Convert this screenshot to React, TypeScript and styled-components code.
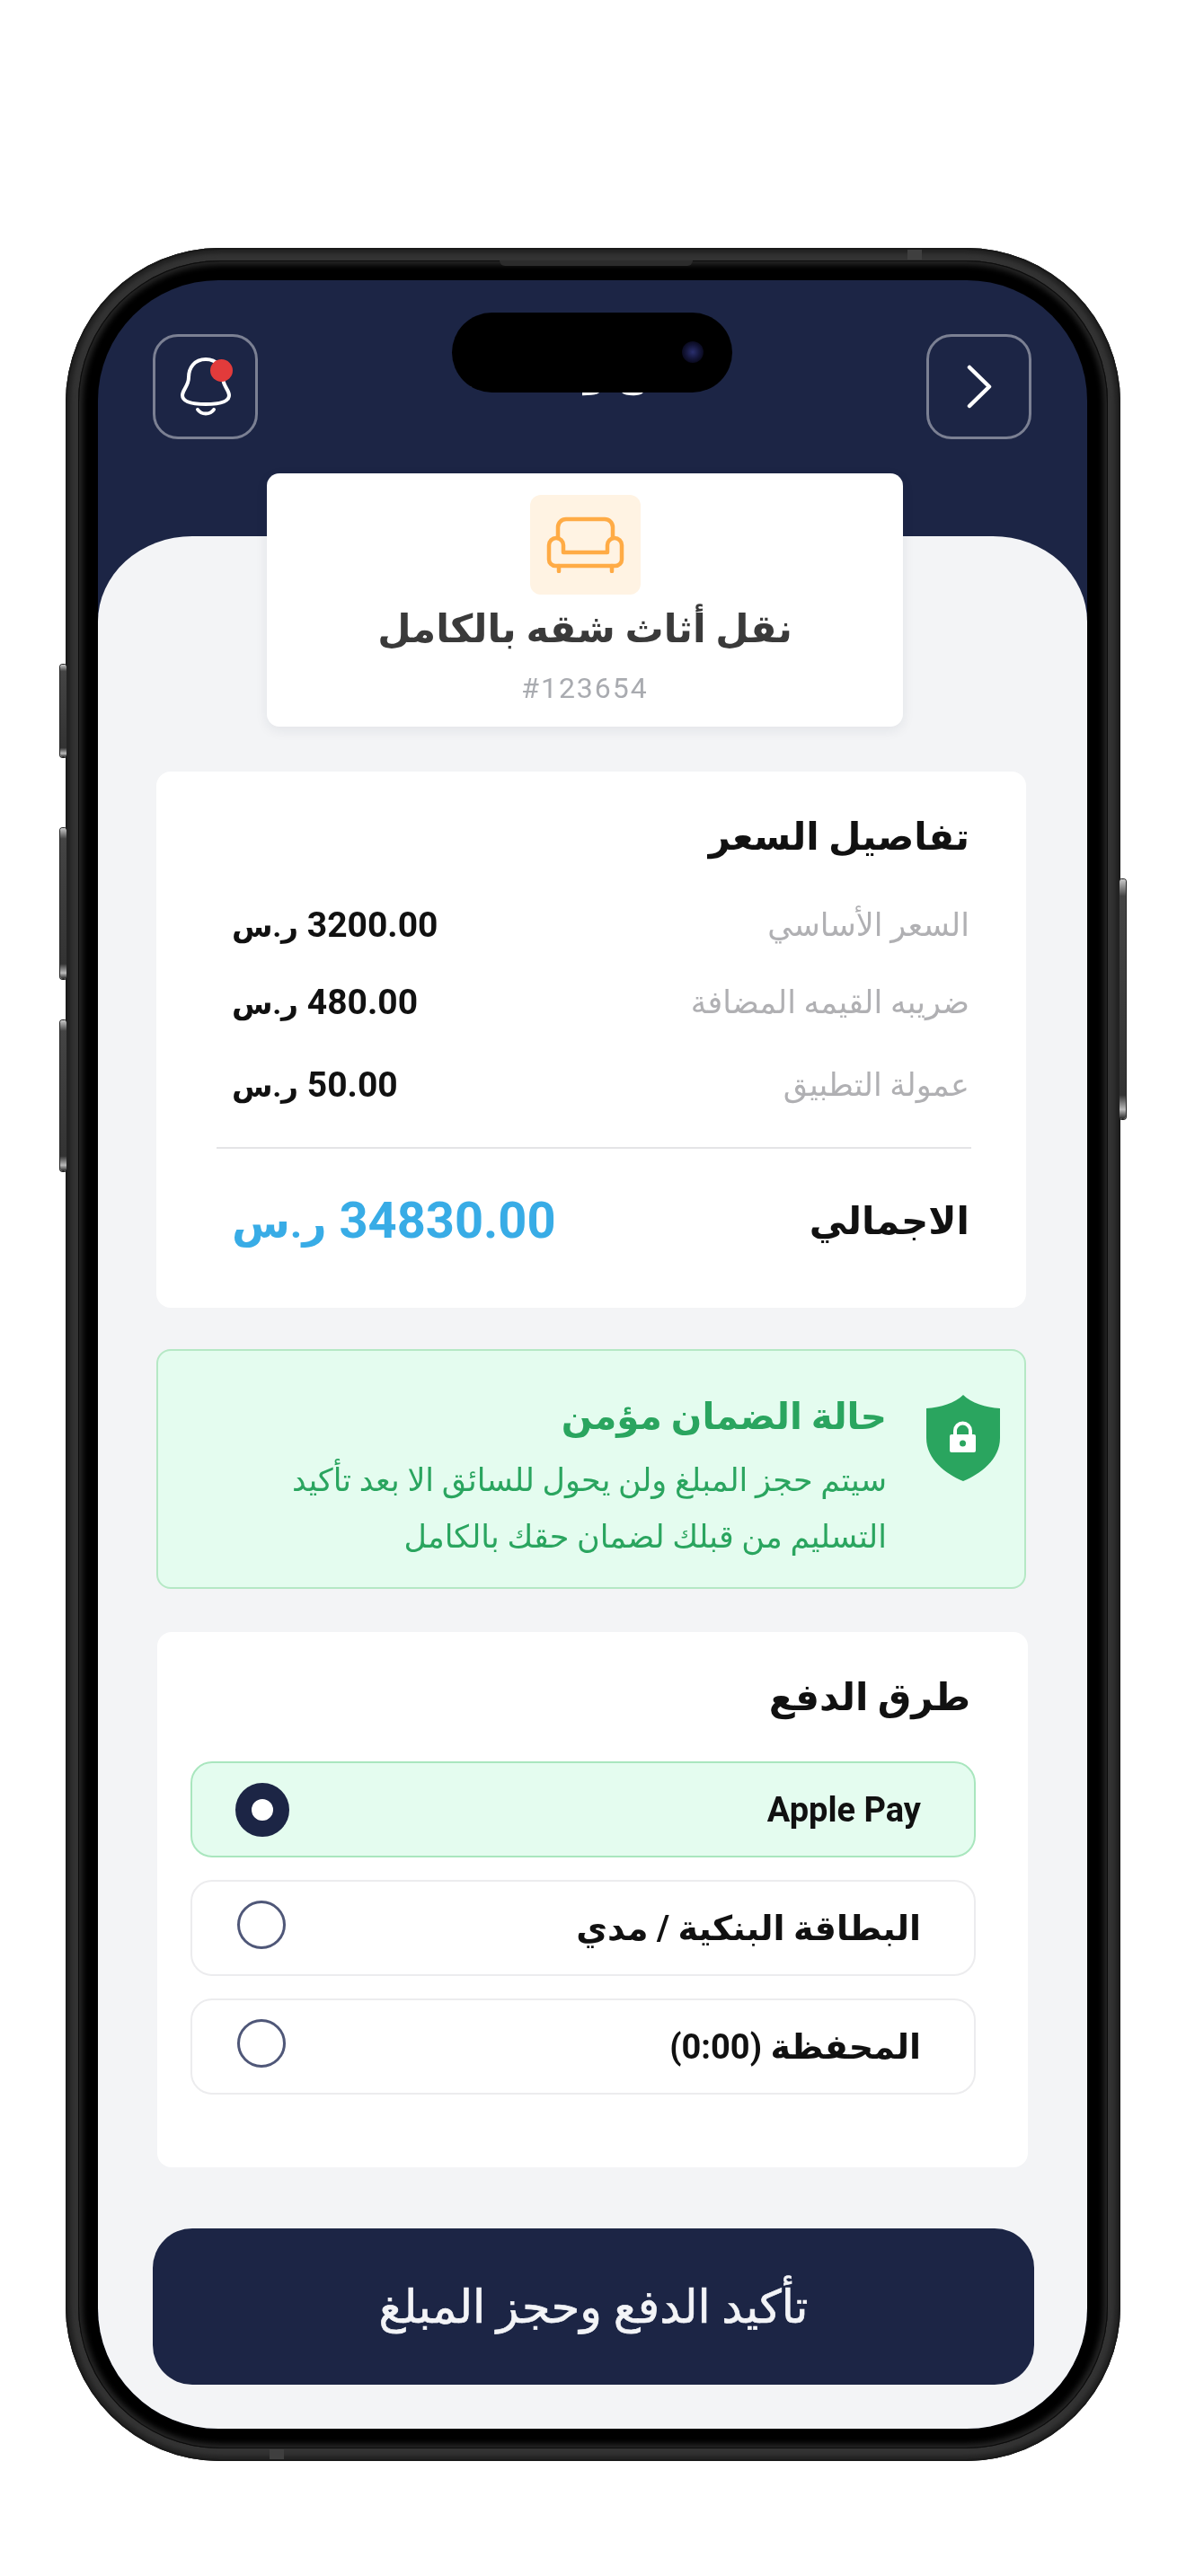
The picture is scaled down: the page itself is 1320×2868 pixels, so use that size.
import React from 'react';
import styled, { createGlobalStyle } from 'styled-components';

const GlobalStyle = createGlobalStyle`
  html, body {
    margin: 0;
    padding: 0;
    background: #fff;
    font-family: "Roboto", "DejaVu Sans", sans-serif;
  }
  * { box-sizing: border-box; }
`;

const navy = '#1c2545';
const green = '#2aa55f';

const Page = styled.div`
  width: 1320px;
  height: 2868px;
  padding: 276px 0 0 73px;
`;

const Frame = styled.div`
  position: relative;
  width: 1174px;
  height: 2464px;
  padding: 14px;
  border-radius: 172px;
  background: #333;
  box-shadow: inset 0 0 0 2px #1a1a1a, inset 0 0 4px 6px #222;
`;

const Bezel = styled.div`
  width: 100%;
  height: 100%;
  padding: 22px;
  border-radius: 158px;
  background: #000;
  box-shadow: inset 0 0 0 1px #0c0c0c, inset 0 0 6px 5px #262626;
`;

const Screen = styled.div`
  position: relative;
  width: 1101px;
  height: 2392px;
  overflow: hidden;
  border-radius: 134px;
  background: ${navy};
  filter: blur(0.6px);
`;

const SideKey = styled.span<{ $side: 'left' | 'right'; $top: number; $height: number }>`
  position: absolute;
  top: ${p => p.$top}px;
  ${p => p.$side}: -6px;
  width: 7px;
  height: ${p => p.$height}px;
  border-radius: 3px;
  background: linear-gradient(to bottom, #c9c9c9 0, #444 7%, #333 90%, #bbb 96%, #222 100%);
  box-shadow: 0 0 0 1px #222;
`;

const SpeakerLip = styled.span`
  position: absolute;
  top: 14px;
  left: 483px;
  width: 215px;
  height: 6px;
  border-radius: 0 0 6px 6px;
  background: #2c2c2c;
`;

const AntennaBand = styled.span<{ $top?: boolean; $left: number }>`
  position: absolute;
  ${p => (p.$top ? 'top: 2px;' : 'bottom: 2px;')}
  left: ${p => p.$left}px;
  width: 16px;
  height: 11px;
  background: #3f3f3f;
`;

const Island = styled.div`
  position: absolute;
  top: 36px;
  left: 394px;
  width: 312px;
  height: 89px;
  border-radius: 45px;
  background: #000;
`;

const Lens = styled.span`
  position: absolute;
  top: 32px;
  right: 32px;
  width: 24px;
  height: 24px;
  border-radius: 50%;
  background: radial-gradient(circle, #2a2f6e 0, #14163a 45%, #08081a 75%, #000 100%);
`;

const Header = styled.header`
  height: 285px;
  padding: 60px 62px 0 61px;
  display: flex;
  align-items: flex-start;
`;

const IconButton = styled.button`
  position: relative;
  width: 117px;
  height: 117px;
  flex: none;
  padding: 0;
  display: flex;
  align-items: center;
  justify-content: center;
  border: 3px solid rgba(255, 255, 255, 0.42);
  border-radius: 28px;
  background: transparent;
`;

const Dot = styled.span`
  position: absolute;
  top: 25px;
  left: 61px;
  width: 25px;
  height: 25px;
  border-radius: 50%;
  background: #e23b3b;
`;

const HeaderTitle = styled.h1`
  flex: 1;
  margin: 0;
  padding-top: 14px;
  text-align: center;
  font-size: 42px;
  line-height: 60px;
  font-weight: 700;
  color: #fff;
`;

const Sheet = styled.main`
  display: flow-root;
  height: 2107px;
  padding: 0 68px 0 65px;
  border-radius: 105px 105px 0 0 / 95px 95px 0 0;
  background: #f3f4f6;
`;

const JobCard = styled.section`
  width: 708px;
  height: 282px;
  margin: -70px 0 0 123px;
  padding-top: 24px;
  display: flex;
  flex-direction: column;
  align-items: center;
  border-radius: 14px;
  background: #fff;
  box-shadow: 0 4px 14px rgba(30, 40, 70, 0.08);
`;

const IconTile = styled.div`
  width: 123px;
  height: 111px;
  display: flex;
  align-items: center;
  justify-content: center;
  border-radius: 12px;
  background: #fff3e3;
`;

const JobTitle = styled.h2`
  margin: 8px 0 0;
  font-size: 43px;
  line-height: 60px;
  font-weight: 700;
  color: #3a3a3a;
`;

const JobCode = styled.div`
  margin-top: 18px;
  font-size: 32px;
  line-height: 36px;
  letter-spacing: 2px;
  color: #a9abb0;
`;

const PriceCard = styled.section`
  height: 597px;
  margin-top: 50px;
  padding: 40px 63px 0 84px;
  border-radius: 16px;
  background: #fff;
`;

const SectionTitle = styled.h3`
  margin: 0;
  font-size: 42px;
  line-height: 66px;
  font-weight: 700;
  color: #111;
`;

const PriceRows = styled.div`
  margin-top: 22px;
`;

const PriceRow = styled.div<{ $height: number }>`
  height: ${p => p.$height}px;
  display: flex;
  align-items: center;
  justify-content: space-between;
`;

const PriceLabel = styled.span`
  font-size: 35px;
  color: #b0b0b3;
`;

const PriceValue = styled.span`
  font-size: 39px;
  font-weight: 700;
  color: #111;
`;

const Currency = styled.span<{ $size: number }>`
  font-size: ${p => p.$size}px;
`;

const Divider = styled.hr`
  height: 2px;
  margin: 20px -2px 0 -17px;
  border: 0;
  background: #e4e4e6;
`;

const TotalRow = styled.div`
  height: 160px;
  display: flex;
  align-items: center;
  justify-content: space-between;
`;

const TotalLabel = styled.span`
  font-size: 42px;
  font-weight: 700;
  color: #111;
`;

const TotalValue = styled.span`
  font-size: 56px;
  font-weight: 700;
  color: #38ace6;
`;

const GuaranteeCard = styled.section`
  height: 267px;
  margin-top: 46px;
  padding: 49px 27px 0 0;
  display: flex;
  gap: 44px;
  border: 2px solid #b5e8c5;
  border-radius: 16px;
  background: #e4fcef;
`;

const GuaranteeText = styled.div`
  color: ${green};
`;

const GuaranteeTitle = styled.h4`
  margin: -6px 0 0;
  font-size: 40.5px;
  line-height: 60px;
  font-weight: 700;
`;

const GuaranteeBody = styled.p`
  margin: 10px 0 0;
  font-size: 35px;
  line-height: 63px;
`;

const PayCard = styled.section`
  width: 969px;
  height: 596px;
  margin: 48px 0 0 1px;
  padding: 40px 64px 0 37px;
  border-radius: 16px;
  background: #fff;
`;

const Options = styled.div`
  margin: 38px -6px 0 0;
  display: flex;
  flex-direction: column;
  gap: 25px;
`;

const Option = styled.div<{ $active?: boolean }>`
  height: 107px;
  padding: 0 59px 0 0;
  display: flex;
  align-items: center;
  justify-content: space-between;
  border: 2px solid ${p => (p.$active ? '#a9e6be' : '#ececee')};
  border-radius: 24px;
  background: ${p => (p.$active ? '#e4fcef' : '#fff')};
`;

const OptionLabel = styled.span`
  font-size: 38px;
  font-weight: 700;
  color: #111;
`;

const Radio = styled.span<{ $active?: boolean }>`
  flex: none;
  border-radius: 50%;
  ${p =>
    p.$active
      ? `width: 60px; height: 60px; margin: 0 0 0 48px; border: 18px solid ${navy}; background: #fff;`
      : `width: 54px; height: 54px; margin: -8px 0 0 50px; border: 3px solid #4f5778; background: #fff;`}
`;

const ConfirmButton = styled.button`
  display: block;
  width: 981px;
  height: 174px;
  margin: 68px 0 0 -4px;
  border: 0;
  border-radius: 44px;
  background: ${navy};
  color: #f3f4f7;
  font-family: inherit;
  font-size: 51px;
  -webkit-text-stroke: 0.7px #f3f4f7;
`;

const BellIcon = () => (
  <svg width="56" height="65" viewBox="0 0 56 65" fill="none" stroke="#fff" strokeWidth="4" strokeLinecap="round">
    <path d="M28 2C15 2 9 12 9 22C9 32 2 36 2 42C2 50 14 52 28 52C42 52 54 50 54 42C54 36 47 32 47 22C47 12 41 2 28 2Z" />
    <path d="M19 58C23 64 33 64 37 58" />
  </svg>
);

const ChevronIcon = () => (
  <svg width="28" height="49" viewBox="0 0 28 49" fill="none" stroke="#fff" strokeWidth="4.5" strokeLinecap="round" strokeLinejoin="round">
    <path d="M3 3L25 24.5L3 46" />
  </svg>
);

const SofaIcon = () => (
  <svg width="89" height="63" viewBox="-2 -2 89 63" fill="none" stroke="#ffab45" strokeWidth="4.5" strokeLinecap="round" strokeLinejoin="round">
    <path d="M12 22V10a9 9 0 0 1 9-9H64a9 9 0 0 1 9 9V22" />
    <path d="M2 30a8 8 0 0 1 16 0V38H67V30a8 8 0 0 1 16 0V46a7 7 0 0 1-7 7H9a7 7 0 0 1-7-7Z" />
    <path d="M13 53v6M72 53v6" />
  </svg>
);

const ShieldIcon = () => (
  <svg width="82" height="96" viewBox="0 0 82 96" style={{ flex: 'none' }}>
    <path fill={green} d="M41 0C50 9 66 14 82 15V48C82 72 60 88 41 96C22 88 0 72 0 48V15C16 14 32 9 41 0Z" />
    <path fill="none" stroke="#fff" strokeWidth="4" d="M32 45V40a8.5 8.5 0 0 1 17 0V45" />
    <rect x="26" y="44" width="29" height="20" rx="2" fill="#fff" />
    <circle cx="40.5" cy="54" r="3.5" fill={green} />
  </svg>
);

const priceRows = [
  { label: 'السعر الأساسي', amount: '3200.00', height: 86 },
  { label: 'ضريبه القيمه المضافة', amount: '480.00', height: 86 },
  { label: 'عمولة التطبيق', amount: '50.00', height: 98 },
];

export default function App() {
  return (
    <Page>
      <GlobalStyle />
      <Frame>
        <SideKey $side="left" $top={464} $height={103} />
        <SideKey $side="left" $top={646} $height={168} />
        <SideKey $side="left" $top={860} $height={168} />
        <SideKey $side="right" $top={703} $height={267} />
        <SpeakerLip />
        <AntennaBand $top $left={937} />
        <AntennaBand $left={227} />
        <Bezel>
          <Screen>
            <Header>
              <IconButton aria-label="notifications">
                <BellIcon />
                <Dot />
              </IconButton>
              <HeaderTitle dir="rtl">الدفع والتأكيد</HeaderTitle>
              <IconButton aria-label="back">
                <ChevronIcon />
              </IconButton>
            </Header>
            <Sheet>
              <JobCard>
                <IconTile>
                  <SofaIcon />
                </IconTile>
                <JobTitle dir="rtl">نقل أثاث شقه بالكامل</JobTitle>
                <JobCode>#123654</JobCode>
              </JobCard>

              <PriceCard dir="rtl">
                <SectionTitle>تفاصيل السعر</SectionTitle>
                <PriceRows>
                  {priceRows.map(row => (
                    <PriceRow key={row.label} $height={row.height}>
                      <PriceLabel>{row.label}</PriceLabel>
                      <PriceValue>
                        {row.amount} <Currency $size={33}>ر.س</Currency>
                      </PriceValue>
                    </PriceRow>
                  ))}
                </PriceRows>
                <Divider />
                <TotalRow>
                  <TotalLabel>الاجمالي</TotalLabel>
                  <TotalValue>
                    34830.00 <Currency $size={47}>ر.س</Currency>
                  </TotalValue>
                </TotalRow>
              </PriceCard>

              <GuaranteeCard dir="rtl">
                <ShieldIcon />
                <GuaranteeText>
                  <GuaranteeTitle>حالة الضمان مؤمن</GuaranteeTitle>
                  <GuaranteeBody>
                    سيتم حجز المبلغ ولن يحول للسائق الا بعد تأكيد
                    <br />
                    التسليم من قبلك لضمان حقك بالكامل
                  </GuaranteeBody>
                </GuaranteeText>
              </GuaranteeCard>

              <PayCard dir="rtl">
                <SectionTitle>طرق الدفع</SectionTitle>
                <Options>
                  <Option $active>
                    <OptionLabel>Apple Pay</OptionLabel>
                    <Radio $active />
                  </Option>
                  <Option>
                    <OptionLabel>البطاقة البنكية / مدي</OptionLabel>
                    <Radio />
                  </Option>
                  <Option>
                    <OptionLabel>المحفظة (0:00)</OptionLabel>
                    <Radio />
                  </Option>
                </Options>
              </PayCard>

              <ConfirmButton dir="rtl">تأكيد الدفع وحجز المبلغ</ConfirmButton>
            </Sheet>
            <Island>
              <Lens />
            </Island>
          </Screen>
        </Bezel>
      </Frame>
    </Page>
  );
}
